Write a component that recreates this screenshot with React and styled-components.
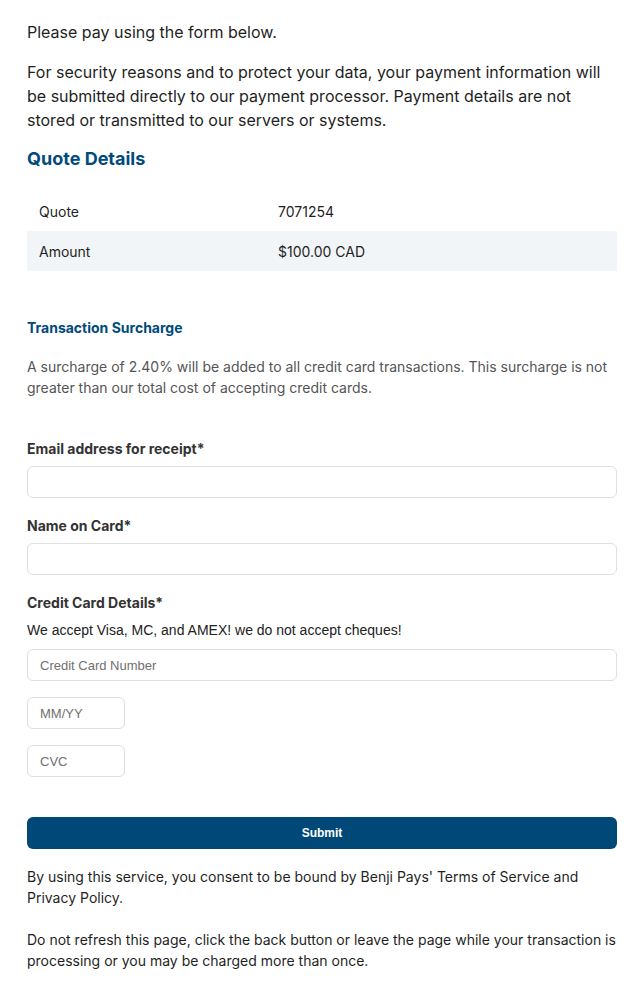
import React from 'react'
import styled, { createGlobalStyle } from 'styled-components';

const GlobalStyle = createGlobalStyle`
  body {
    margin: 0;
    background: #fff;
    font-family: Inter, "Liberation Sans", sans-serif;
    color: #1f1f1f;
  }
`;

const Page = styled.div`
  padding: 20px 23px 20px 27px;
  display: flex;
  flex-direction: column;
`;

const Intro = styled.p`
  margin: 0 0 ${(p) => p.gap || 0}px;
  font-size: 16px;
  line-height: 24px;
  color: #1f1f1f;
`;

const Heading = styled.h2`
  margin: 0 0 20px;
  font-size: 18px;
  line-height: 24px;
  font-weight: 700;
  color: #004a7c;
`;

const Table = styled.div`
  display: flex;
  flex-direction: column;
  margin-bottom: 47px;
`;

const Row = styled.div`
  display: grid;
  grid-template-columns: 239px 1fr;
  height: 40px;
  align-items: center;
  padding-left: 12px;
  font-size: 14px;
  color: #1f1f1f;
  background: ${(p) => (p.shaded ? '#f1f5f8' : 'transparent')};
`;

const SubHeading = styled.h3`
  margin: 0 0 18px;
  font-size: 14px;
  line-height: 20px;
  font-weight: 700;
  color: #004a7c;
`;

const Note = styled.p`
  margin: 0 0 41px;
  font-size: 14px;
  line-height: 21px;
  color: #555;
`;

const Field = styled.div`
  display: flex;
  flex-direction: column;
  margin-bottom: ${(p) => p.gap ?? 18}px;
`;

const Label = styled.label`
  font-size: 14px;
  line-height: 20px;
  font-weight: 700;
  color: #333;
  margin-bottom: 7px;
`;

const Hint = styled.div`
  font-family: "Liberation Sans", Arial, sans-serif;
  font-size: 14px;
  line-height: 20px;
  color: #222;
  margin: 0 0 9px;
`;

const Input = styled.input`
  box-sizing: border-box;
  width: ${(p) => p.w || '100%'};
  height: 32px;
  border: 1px solid #dcdfe3;
  border-radius: 6px;
  padding: 0 12px;
  font-family: "Liberation Sans", Arial, sans-serif;
  font-size: 13px;
  color: #333;
  background: #fff;
  outline: none;
  margin-bottom: ${(p) => p.gap || 0}px;

  &::placeholder {
    color: #707070;
  }
`;

const Submit = styled.button`
  height: 32px;
  width: 100%;
  border: none;
  border-radius: 6px;
  background: #004878;
  color: #fff;
  font-family: "Liberation Sans", Arial, sans-serif;
  font-weight: 700;
  font-size: 12px;
  margin: 40px 0 17px;
  cursor: pointer;
`;

const Footer = styled.p`
  margin: 0 0 21px;
  font-size: 14px;
  line-height: 21px;
  color: #1f1f1f;
`;

function App() {
  return (
    <Page>
      <GlobalStyle />
      <Intro gap={16}>Please pay using the form below.</Intro>
      <Intro gap={15}>
        For security reasons and to protect your data, your payment information will
        be submitted directly to our payment processor. Payment details are not
        stored or transmitted to our servers or systems.
      </Intro>
      <Heading>Quote Details</Heading>
      <Table>
        <Row><span>Quote</span><span>7071254</span></Row>
        <Row shaded><span>Amount</span><span>$100.00 CAD</span></Row>
      </Table>
      <SubHeading>Transaction Surcharge</SubHeading>
      <Note>
        A surcharge of 2.40% will be added to all credit card transactions. This surcharge is not
        greater than our total cost of accepting credit cards.
      </Note>
      <Field>
        <Label>Email address for receipt*</Label>
        <Input type="email" />
      </Field>
      <Field>
        <Label>Name on Card*</Label>
        <Input type="text" />
      </Field>
      <Field gap={0}>
        <Label>Credit Card Details*</Label>
        <Hint>We accept Visa, MC, and AMEX! we do not accept cheques!</Hint>
        <Input placeholder="Credit Card Number" gap={16} />
        <Input placeholder="MM/YY" w="98px" gap={16} />
        <Input placeholder="CVC" w="98px" />
      </Field>
      <Submit>Submit</Submit>
      <Footer>
        By using this service, you consent to be bound by Benji Pays' Terms of Service and
        Privacy Policy.
      </Footer>
      <Footer>
        Do not refresh this page, click the back button or leave the page while your transaction is
        processing or you may be charged more than once.
      </Footer>
    </Page>
  );
}

export default App;
